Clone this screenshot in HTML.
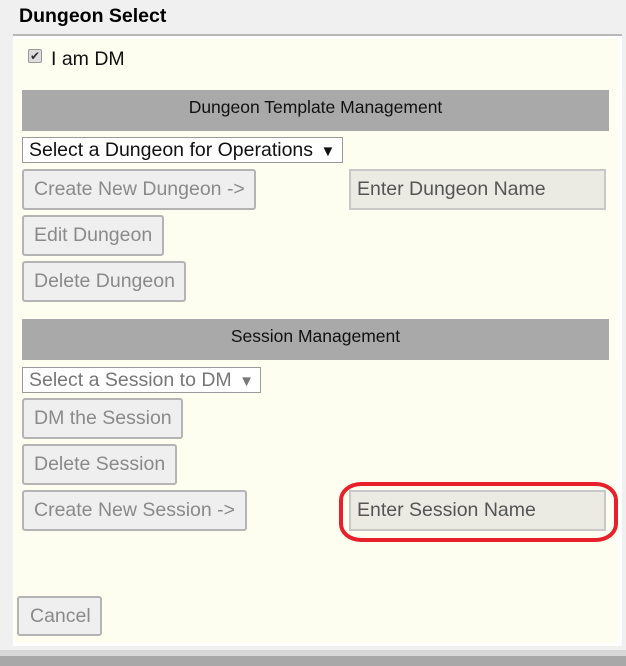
<!DOCTYPE html>
<html><head><style>
*{margin:0;padding:0;box-sizing:border-box}
body{width:626px;height:666px;background:#f0f0f0;position:relative;overflow:hidden;font-family:"Liberation Sans",sans-serif}
.a{position:absolute}
.btn{position:absolute;background:#efefef;border:2px solid #b4b4b4;border-radius:3px;color:#8a8a8a;font-size:19.5px;line-height:36px;padding-left:10px;white-space:nowrap}
.inp{position:absolute;background:#ebebe4;border:2px solid #c8c8c8;color:#555;font-size:19.5px;line-height:36px;padding-left:6px;white-space:nowrap}
.bar{position:absolute;left:22px;width:587px;height:41px;background:#a9a9a9;color:#111;font-size:17.5px;text-align:center;line-height:34px}
.sel{position:absolute;background:#fff;border:1px solid #9a9a9a;font-size:19.5px;line-height:24px;padding-left:6px;white-space:nowrap}
</style></head><body>
<div class="a" style="left:19px;top:5px;font-size:19.5px;font-weight:bold;color:#000">Dungeon Select</div>
<div class="a" style="left:13px;top:34px;width:609px;height:2px;background:#b8b8b8"></div>
<div class="a" style="left:13px;top:36px;width:609px;height:610px;background:#fff"></div>
<div class="a" style="left:15px;top:39px;width:602px;height:604px;background:#fefef0"></div>
<div class="a" style="left:0;top:656px;width:626px;height:10px;background:#a8a8a8"></div>
<div class="a" style="left:0;top:650px;width:626px;height:6px;background:#d8d8d8"></div>
<div class="a" style="left:28px;top:49px;width:14px;height:14px;background:#ddd;border:1px solid #999;border-radius:2px;font-size:12px;line-height:12px;text-align:center;color:#333">✔</div>
<div class="a" style="left:51px;top:48px;font-size:19.5px;color:#111">I am DM</div>
<div class="bar" style="top:90px">Dungeon Template Management</div>
<div class="sel" style="left:22px;top:137px;width:321px;height:26px;color:#111">Select a Dungeon for Operations <span style="font-size:15px;margin-left:2px">▼</span></div>
<div class="btn" style="left:22px;top:169px;width:234px;height:41px">Create New Dungeon -&gt;</div>
<div class="inp" style="left:349px;top:169px;width:257px;height:41px">Enter Dungeon Name</div>
<div class="btn" style="left:22px;top:215px;width:142px;height:41px">Edit Dungeon</div>
<div class="btn" style="left:22px;top:261px;width:164px;height:41px">Delete Dungeon</div>
<div class="bar" style="top:319px">Session Management</div>
<div class="sel" style="left:22px;top:367px;width:239px;height:26px;color:#777">Select a Session to DM <span style="font-size:15px;margin-left:2px">▼</span></div>
<div class="btn" style="left:22px;top:398px;width:161px;height:41px">DM the Session</div>
<div class="btn" style="left:22px;top:444px;width:155px;height:41px">Delete Session</div>
<div class="btn" style="left:22px;top:490px;width:225px;height:41px">Create New Session -&gt;</div>
<div class="inp" style="left:349px;top:490px;width:257px;height:41px">Enter Session Name</div>
<div class="a" style="left:339px;top:482px;width:279px;height:60px;border:4px solid #e8202a;border-radius:22px/18px"></div>
<div class="btn" style="left:17px;top:596px;width:85px;height:40px;padding-left:11px">Cancel</div>
</body></html>
